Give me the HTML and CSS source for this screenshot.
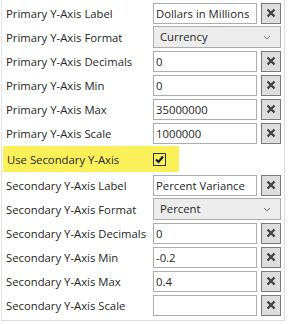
FILE: index.html
```html
<!DOCTYPE html>
<html lang="en">
<head>
  <meta charset="UTF-8">
  <title>Axis Properties</title>
  <link rel="stylesheet" href="styles.css">
</head>
<body>
  <div class="panel">
    <div class="row">
      <span class="label">Primary Y-Axis Label</span>
      <span class="field">Dollars in Millions</span>
      <button class="clear"><svg viewBox="0 0 10 10"><path d="M1.5 1.5 L8.5 8.5 M8.5 1.5 L1.5 8.5"/></svg></button>
    </div>
    <div class="row">
      <span class="label">Primary Y-Axis Format</span>
      <span class="select">Currency<svg class="chev" viewBox="0 0 8 5"><path d="M1 1 L4 4 L7 1"/></svg></span>
    </div>
    <div class="row">
      <span class="label">Primary Y-Axis Decimals</span>
      <span class="field">0</span>
      <button class="clear"><svg viewBox="0 0 10 10"><path d="M1.5 1.5 L8.5 8.5 M8.5 1.5 L1.5 8.5"/></svg></button>
    </div>
    <div class="row">
      <span class="label">Primary Y-Axis Min</span>
      <span class="field">0</span>
      <button class="clear"><svg viewBox="0 0 10 10"><path d="M1.5 1.5 L8.5 8.5 M8.5 1.5 L1.5 8.5"/></svg></button>
    </div>
    <div class="row">
      <span class="label">Primary Y-Axis Max</span>
      <span class="field">35000000</span>
      <button class="clear"><svg viewBox="0 0 10 10"><path d="M1.5 1.5 L8.5 8.5 M8.5 1.5 L1.5 8.5"/></svg></button>
    </div>
    <div class="row">
      <span class="label">Primary Y-Axis Scale</span>
      <span class="field">1000000</span>
      <button class="clear"><svg viewBox="0 0 10 10"><path d="M1.5 1.5 L8.5 8.5 M8.5 1.5 L1.5 8.5"/></svg></button>
    </div>
    <div class="row highlight">
      <span class="label">Use Secondary Y-Axis</span>
      <span class="check"><svg viewBox="0 0 11 11"><path d="M2 5.5 L4.5 8 L9 2.5"/></svg></span>
    </div>
    <div class="row">
      <span class="label">Secondary Y-Axis Label</span>
      <span class="field">Percent Variance</span>
      <button class="clear"><svg viewBox="0 0 10 10"><path d="M1.5 1.5 L8.5 8.5 M8.5 1.5 L1.5 8.5"/></svg></button>
    </div>
    <div class="row">
      <span class="label">Secondary Y-Axis Format</span>
      <span class="select">Percent<svg class="chev" viewBox="0 0 8 5"><path d="M1 1 L4 4 L7 1"/></svg></span>
    </div>
    <div class="row">
      <span class="label">Secondary Y-Axis Decimals</span>
      <span class="field">0</span>
      <button class="clear"><svg viewBox="0 0 10 10"><path d="M1.5 1.5 L8.5 8.5 M8.5 1.5 L1.5 8.5"/></svg></button>
    </div>
    <div class="row">
      <span class="label">Secondary Y-Axis Min</span>
      <span class="field">-0.2</span>
      <button class="clear"><svg viewBox="0 0 10 10"><path d="M1.5 1.5 L8.5 8.5 M8.5 1.5 L1.5 8.5"/></svg></button>
    </div>
    <div class="row">
      <span class="label">Secondary Y-Axis Max</span>
      <span class="field">0.4</span>
      <button class="clear"><svg viewBox="0 0 10 10"><path d="M1.5 1.5 L8.5 8.5 M8.5 1.5 L1.5 8.5"/></svg></button>
    </div>
    <div class="row">
      <span class="label">Secondary Y-Axis Scale</span>
      <span class="field"></span>
      <button class="clear"><svg viewBox="0 0 10 10"><path d="M1.5 1.5 L8.5 8.5 M8.5 1.5 L1.5 8.5"/></svg></button>
    </div>
  </div>
</body>
</html>
```

FILE: styles.css
```css
body {
  margin: 0;
  background-color: #ffffff;
  font-family: 'Open Sans', 'Noto Sans', sans-serif;
  font-size: 11.3px;
  color: #262626;
}

.panel {
  width: 281px;
  height: 318px;
  margin-left: 1px;
  padding: 2px 1px 0 0;
  border-left: 1px solid #e3e3e3;
  border-right: 1px solid #dcdcdc;
  border-bottom: 1px solid #dcdcdc;
  display: flex;
  flex-direction: column;
  gap: 2px;
}

.row {
  display: flex;
  align-items: center;
  height: 22px;
}

.label {
  width: 147px;
  padding-left: 4px;
  white-space: nowrap;
  flex-shrink: 0;
}

.field {
  box-sizing: border-box;
  width: 104px;
  height: 21px;
  border: 1px solid #abadb3;
  background-color: #ffffff;
  padding: 0 2px;
  line-height: 19px;
  white-space: nowrap;
  overflow: hidden;
}

.clear {
  box-sizing: border-box;
  width: 20px;
  height: 21px;
  margin-left: 4px;
  padding: 0;
  border: 1px solid #7a7a7a;
  background-color: #dddddd;
  display: flex;
  align-items: center;
  justify-content: center;
}

.clear svg {
  width: 10px;
  height: 10px;
}

.clear path {
  stroke: #444444;
  stroke-width: 2.4;
  fill: none;
}

.select {
  box-sizing: border-box;
  width: 128px;
  height: 22px;
  border: 1px solid #acacac;
  background-color: #ececec;
  padding: 0 6px 0 6px;
  line-height: 20px;
  display: flex;
  justify-content: space-between;
  align-items: center;
}

.chev {
  width: 8px;
  height: 5px;
  margin-right: 3px;
}

.chev path {
  stroke: #707070;
  stroke-width: 1;
  fill: none;
}

.highlight {
  height: 26px;
  width: 176px;
  margin-left: 1px;
  background-color: #f9f05a;
}

.highlight .label {
  width: 146px;
}

.check {
  box-sizing: border-box;
  width: 13px;
  height: 13px;
  border: 1px solid #333333;
  display: flex;
  align-items: center;
  justify-content: center;
}

.check svg {
  width: 11px;
  height: 11px;
}

.check path {
  stroke: #111111;
  stroke-width: 2;
  fill: none;
}
```
